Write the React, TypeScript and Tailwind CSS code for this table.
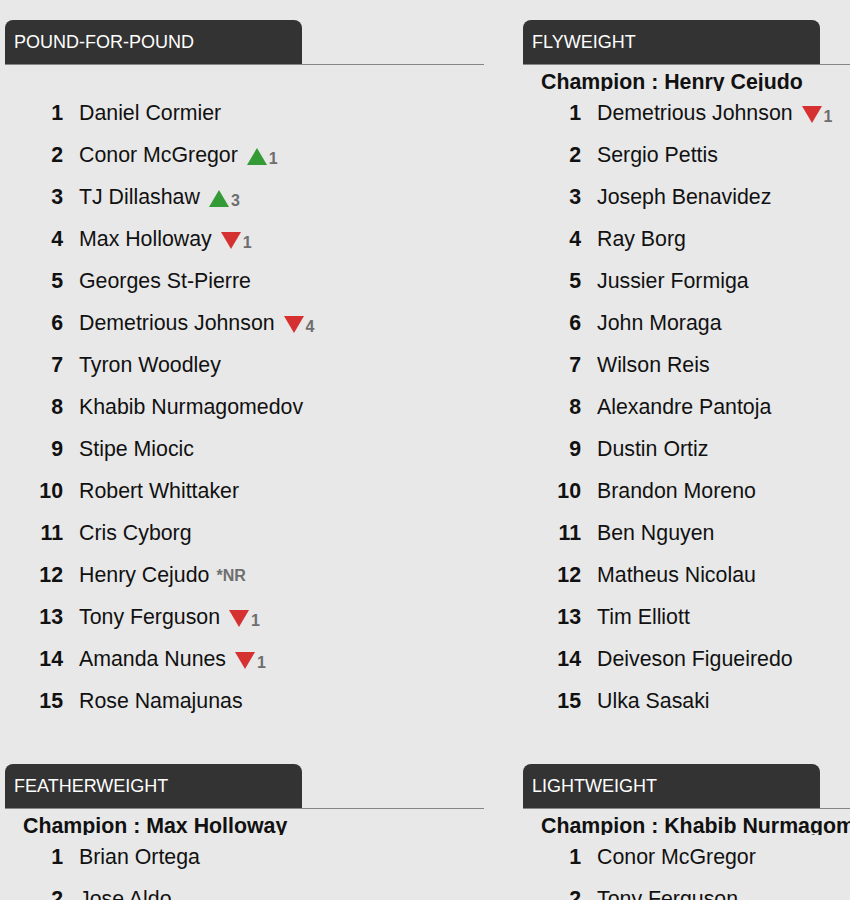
import React from 'react';

type Move = { dir: 'up' | 'down'; n: number } | { nr: true };

type Fighter = { name: string; move?: Move };

type Division = {
  title: string;
  champion?: string;
  fighters: Fighter[];
};

const divisions: Division[] = [
  {
    title: 'POUND-FOR-POUND',
    fighters: [
      { name: 'Daniel Cormier' },
      { name: 'Conor McGregor', move: { dir: 'up', n: 1 } },
      { name: 'TJ Dillashaw', move: { dir: 'up', n: 3 } },
      { name: 'Max Holloway', move: { dir: 'down', n: 1 } },
      { name: 'Georges St-Pierre' },
      { name: 'Demetrious Johnson', move: { dir: 'down', n: 4 } },
      { name: 'Tyron Woodley' },
      { name: 'Khabib Nurmagomedov' },
      { name: 'Stipe Miocic' },
      { name: 'Robert Whittaker' },
      { name: 'Cris Cyborg' },
      { name: 'Henry Cejudo', move: { nr: true } },
      { name: 'Tony Ferguson', move: { dir: 'down', n: 1 } },
      { name: 'Amanda Nunes', move: { dir: 'down', n: 1 } },
      { name: 'Rose Namajunas' },
    ],
  },
  {
    title: 'FLYWEIGHT',
    champion: 'Henry Cejudo',
    fighters: [
      { name: 'Demetrious Johnson', move: { dir: 'down', n: 1 } },
      { name: 'Sergio Pettis' },
      { name: 'Joseph Benavidez' },
      { name: 'Ray Borg' },
      { name: 'Jussier Formiga' },
      { name: 'John Moraga' },
      { name: 'Wilson Reis' },
      { name: 'Alexandre Pantoja' },
      { name: 'Dustin Ortiz' },
      { name: 'Brandon Moreno' },
      { name: 'Ben Nguyen' },
      { name: 'Matheus Nicolau' },
      { name: 'Tim Elliott' },
      { name: 'Deiveson Figueiredo' },
      { name: 'Ulka Sasaki' },
    ],
  },
  {
    title: 'FEATHERWEIGHT',
    champion: 'Max Holloway',
    fighters: [
      { name: 'Brian Ortega' },
      { name: 'Jose Aldo' },
      { name: 'Frankie Edgar' },
      { name: 'Cub Swanson' },
    ],
  },
  {
    title: 'LIGHTWEIGHT',
    champion: 'Khabib Nurmagomedov',
    fighters: [
      { name: 'Conor McGregor' },
      { name: 'Tony Ferguson' },
      { name: 'Dustin Poirier' },
      { name: 'Eddie Alvarez' },
    ],
  },
];

function Movement({ move }: { move: Move }) {
  if ('nr' in move) {
    return <span className="ml-[7px] text-[16px] font-bold text-[#6e6e6e]">*NR</span>;
  }
  const up = move.dir === 'up';
  return (
    <span className="ml-[9px] inline-flex items-center">
      <svg width="20" height="17" viewBox="0 0 20 17" className="block">
        {up ? (
          <polygon points="10,0 20,17 0,17" fill="#339a35" />
        ) : (
          <polygon points="0,0 20,0 10,17" fill="#d63131" />
        )}
      </svg>
      <span className="ml-[2px] mt-[5px] text-[16px] font-bold text-[#6e6e6e]">{move.n}</span>
    </span>
  );
}

function DivisionBlock({ division }: { division: Division }) {
  return (
    <div className="mb-[41px]">
      {/* tab + rule */}
      <div className="flex border-b border-[#858585]">
        <div className="flex h-[44px] w-[297px] items-center rounded-t-[8px] bg-[#333333] pl-[9px] text-[18px] text-white">
          {division.title}
        </div>
      </div>

      <div className="h-[26px] overflow-hidden whitespace-nowrap pl-[18px] text-[21.33px] font-bold leading-[34px] text-[#111]">
        {division.champion ? `Champion : ${division.champion}` : ''}
      </div>

      <ol className="pt-[2px]">
        {division.fighters.map((f, i) => (
          <li key={f.name} className="flex h-[42px] items-center whitespace-nowrap text-[21.33px] text-[#111]">
            <span className="w-[58px] text-right font-bold">{i + 1}</span>
            <span className="pl-[16px]">{f.name}</span>
            {f.move && <Movement move={f.move} />}
          </li>
        ))}
      </ol>
    </div>
  );
}

export default function App() {
  return (
    <div className="h-[900px] w-[850px] overflow-hidden bg-[#e8e8e8] font-['Liberation_Sans',Arial,sans-serif]">
      <div className="grid w-[1010px] grid-cols-[479px_479px] gap-x-[39px] pl-[5px] pt-[20px]">
        {divisions.map((d) => (
          <DivisionBlock key={d.title} division={d} />
        ))}
      </div>
    </div>
  );
}
